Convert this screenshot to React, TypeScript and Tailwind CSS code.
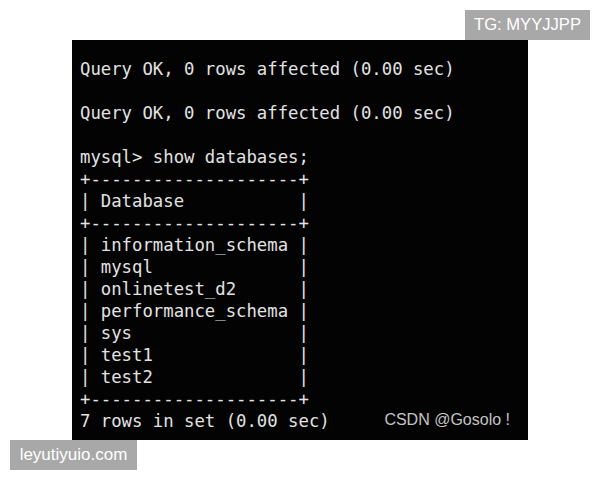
import React from 'react';

const lines = [
  'Query OK, 0 rows affected (0.00 sec)',
  '',
  'Query OK, 0 rows affected (0.00 sec)',
  '',
  'mysql> show databases;',
  '+--------------------+',
  '| Database           |',
  '+--------------------+',
  '| information_schema |',
  '| mysql              |',
  '| onlinetest_d2      |',
  '| performance_schema |',
  '| sys                |',
  '| test1              |',
  '| test2              |',
  '+--------------------+',
  '7 rows in set (0.00 sec)',
];

const App = () => {
  return (
    <div className="relative w-[600px] h-[480px] bg-white overflow-hidden" style={{ fontFamily: '"Liberation Sans", Arial, sans-serif' }}>
      <div className="pt-[40px] pl-[72px]">
        <div className="relative w-[456px] h-[400px] bg-[#030303] pt-[18px] pl-[8px]">
          <div className="font-['DejaVu_Sans_Mono',monospace] text-[17.3px] leading-[22px] text-[#e2e2e2] whitespace-pre">
            {lines.map((l, i) => (
              <div key={i} className="h-[22px]">{l}</div>
            ))}
          </div>
          <div className="absolute right-[18px] bottom-[8px] text-[16px] text-[#c4c4c4]">CSDN @Gosolo !</div>
        </div>
      </div>

      <div className="absolute top-[10px] right-[10px] h-[30px] w-[125px] flex items-center justify-center bg-[#a8a8a8] text-white text-[16.6px]">
        TG: MYYJJPP
      </div>
      <div className="absolute top-[440px] left-[10px] h-[30px] w-[127px] flex items-center justify-center bg-[#a8a8a8] text-white text-[17px]">
        leyutiyuio.com
      </div>
    </div>
  );
};

export default App;
